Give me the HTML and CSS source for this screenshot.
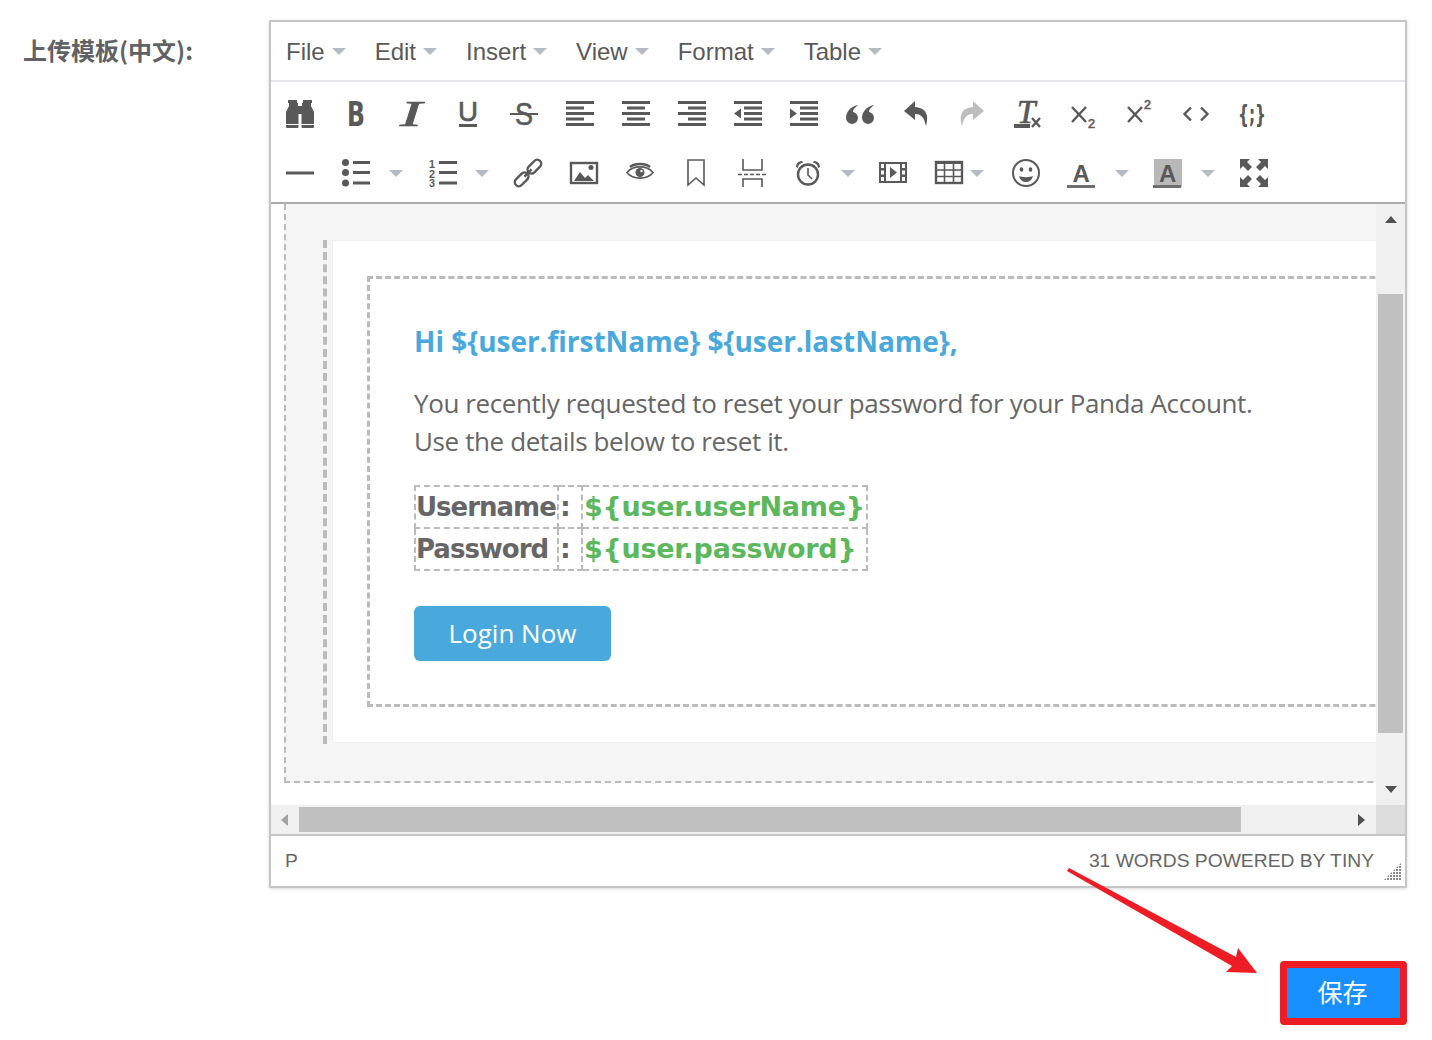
FILE: index.html
```html
<!DOCTYPE html>
<html lang="en">
<head>
    <meta charset="UTF-8">
    <meta name="viewport" content="width=device-width, initial-scale=1.0">
    <title>上传模板</title>
    <link rel="stylesheet" href="styles.css">
</head>
<body>

    <div class="form-row">
        <label class="form-label">上传模板(中文):</label>

        <div class="editor">
            <div class="menubar">
                <span class="menu-item">File<i class="menu-caret"></i></span>
                <span class="menu-item">Edit<i class="menu-caret"></i></span>
                <span class="menu-item">Insert<i class="menu-caret"></i></span>
                <span class="menu-item">View<i class="menu-caret"></i></span>
                <span class="menu-item">Format<i class="menu-caret"></i></span>
                <span class="menu-item">Table<i class="menu-caret"></i></span>
            </div>

            <div class="toolbar">
                <div class="tool-row">
                    <!-- search -->
                    <svg class="ico" viewBox="0 0 28 28"><path d="M2 0h9v3h1v3h4V3h1V0h9v3h-1v3l3 6v12H15.500V14h-3v10H0V12l3-6V3H2z"/><path d="M0 25h12.500v2a1 1 0 0 1-1 1H1a1 1 0 0 1-1-1zM15.500 25H28v2a1 1 0 0 1-1 1H16.500a1 1 0 0 1-1-1z"/></svg>
                    <!-- bold -->
                    <svg class="ico" viewBox="0 0 28 28"><text class="ico-bold" x="5" y="26" font-size="33" textLength="18" lengthAdjust="spacingAndGlyphs">B</text></svg>
                    <!-- italic -->
                    <svg class="ico" viewBox="0 0 28 28"><text class="ico-serif" x="2" y="26" font-size="36" textLength="22" lengthAdjust="spacingAndGlyphs">I</text></svg>
                    <!-- underline -->
                    <svg class="ico" viewBox="0 0 28 28"><text class="ico-med" x="4" y="21" font-size="27" textLength="20" lengthAdjust="spacingAndGlyphs">U</text><path d="M5 24h18v3H5z"/></svg>
                    <!-- strike -->
                    <svg class="ico" viewBox="0 0 28 28"><text class="ico-med" x="5" y="25" font-size="32" textLength="18" lengthAdjust="spacingAndGlyphs">S</text><path d="M0 13h28v2H0z"/></svg>
                    <!-- align left / center / right -->
                    <svg class="ico" viewBox="0 0 28 28"><path d="M0 1h28v3H0zM0 6.500h18v3H0zM0 12h28v3H0zM0 17.500h18v3H0zM0 23h28v3H0z"/></svg>
                    <svg class="ico" viewBox="0 0 28 28"><path d="M0 1h28v3H0zM5 6.500h18v3H5zM0 12h28v3H0zM5 17.500h18v3H5zM0 23h28v3H0z"/></svg>
                    <svg class="ico" viewBox="0 0 28 28"><path d="M0 1h28v3H0zM10 6.500h18v3H10zM0 12h28v3H0zM10 17.500h18v3H10zM0 23h28v3H0z"/></svg>
                    <!-- outdent / indent -->
                    <svg class="ico" viewBox="0 0 28 28"><path d="M0 1h28v3H0zM10 6.500h18v3H10zM10 12h18v3H10zM10 17.500h18v3H10zM0 23h28v3H0zM0 13.500l7-5v10z"/></svg>
                    <svg class="ico" viewBox="0 0 28 28"><path d="M0 1h28v3H0zM10 6.500h18v3H10zM10 12h18v3H10zM10 17.500h18v3H10zM0 23h28v3H0zM7 13.500l-7-5v10z"/></svg>
                    <!-- blockquote -->
                    <svg class="ico" viewBox="0 0 28 28"><path d="M12 5C6 6 0 11 0 18a6 6 0 1 0 7-6c0-3 3-5 5-7zM28 5c-6 1-12 6-12 13a6 6 0 1 0 7-6c0-3 3-5 5-7z"/></svg>
                    <!-- undo / redo -->
                    <svg class="ico" viewBox="0 0 28 28"><path d="M13 1L2 11l11 9v-6c6 0 9 3 11 12 3-10 1-18-11-19z"/></svg>
                    <svg class="ico ico-off" viewBox="0 0 28 28"><path d="M15 1l11 10-11 9v-6c-6 0-9 3-11 12-3-10-1-18 11-19z"/></svg>
                    <!-- remove format -->
                    <svg class="ico" viewBox="0 0 28 28"><text class="ico-serif" x="3" y="23" font-size="33">T</text><path d="M0 24h16v4H0z"/><path class="ico-line" d="M18 18l8 9M26 18l-8 9"/></svg>
                    <!-- subscript / superscript -->
                    <svg class="ico" viewBox="0 0 28 28"><path class="ico-line" d="M2 7l14 15M16 7L2 22"/><text class="ico-med" x="18" y="28" font-size="12" textLength="7" lengthAdjust="spacingAndGlyphs">2</text></svg>
                    <svg class="ico" viewBox="0 0 28 28"><path class="ico-line" d="M2 7l14 15M16 7L2 22"/><text class="ico-med" x="18" y="9" font-size="12" textLength="7" lengthAdjust="spacingAndGlyphs">2</text></svg>
                    <!-- code -->
                    <svg class="ico" viewBox="0 0 28 28"><path class="ico-line" d="M9 7.500L2.500 14 9 20.500M19 7.500l6.500 6.500-6.500 6.500"/></svg>
                    <svg class="ico" viewBox="0 0 28 28"><text class="ico-bold" x="0" y="23" font-size="25" textLength="28" lengthAdjust="spacingAndGlyphs">{;}</text></svg>
                </div>

                <div class="tool-row">
                    <!-- hr -->
                    <svg class="ico" viewBox="0 0 28 28"><path d="M0 12.500h28v3H0z"/></svg>
                    <!-- bullist -->
                    <svg class="ico ico-split" viewBox="0 0 28 28"><circle cx="3.500" cy="3.500" r="3.500"/><circle cx="3.500" cy="13.500" r="3.500"/><circle cx="3.500" cy="24" r="3.500"/><path d="M11 2h17v3H11zM11 12h17v3H11zM11 22.500h17v3H11z"/></svg>
                    <i class="tool-caret tool-caret-list"></i>
                    <!-- numlist -->
                    <svg class="ico ico-split" viewBox="0 0 28 28"><text class="ico-bold-sans" x="0" y="9" font-size="10.500" textLength="6" lengthAdjust="spacingAndGlyphs">1</text><text class="ico-bold-sans" x="0" y="18.500" font-size="10.500" textLength="6" lengthAdjust="spacingAndGlyphs">2</text><text class="ico-bold-sans" x="0" y="28" font-size="10.500" textLength="6" lengthAdjust="spacingAndGlyphs">3</text><path d="M10 2h18v3H10zM10 12h18v3H10zM10 22.500h18v3H10z"/></svg>
                    <i class="tool-caret tool-caret-num"></i>
                    <!-- link -->
                    <svg class="ico" viewBox="0 0 28 28"><g class="ico-line" transform="rotate(-45 14 14)"><rect x="-3" y="10" width="16" height="8" rx="4"/><rect x="15" y="10" width="16" height="8" rx="4"/><path d="M9 14h10"/></g></svg>
                    <!-- image -->
                    <svg class="ico" viewBox="0 0 28 28"><rect class="ico-line" x="1" y="4" width="26" height="20"/><path d="M4 22l6-9 5 6 3-3 6 6z"/><circle cx="21" cy="8.500" r="2.500"/></svg>
                    <!-- preview -->
                    <svg class="ico" viewBox="0 0 28 28"><path class="ico-thin" d="M1 13.500C7 6 21 6 27 13.500 21 21 7 21 1 13.500z"/><path class="ico-line" d="M4 8c5-4 15-4 20 0"/><circle cx="14" cy="13.500" r="4.500"/><circle class="ico-hole" cx="15.500" cy="12" r="1.200"/></svg>
                    <!-- anchor -->
                    <svg class="ico" viewBox="0 0 28 28"><path class="ico-thin" d="M6 1h16v25l-8-7-8 7z"/></svg>
                    <!-- pagebreak -->
                    <svg class="ico" viewBox="0 0 28 28"><path class="ico-thin" d="M5 0v11h19V0M5 28V20h19v8"/><path class="ico-thin" stroke-dasharray="4 2" d="M0 15.500h28"/></svg>
                    <!-- insertdatetime -->
                    <svg class="ico ico-split" viewBox="0 0 28 28"><circle class="ico-line" cx="14" cy="15.500" r="10"/><path class="ico-thin" d="M14 9v7l4 4"/><path d="M2 8c0-4 3-6 6-6l1 2c-3 0-5 2-5 5zM26 8c0-4-3-6-6-6l-1 2c3 0 5 2 5 5z"/></svg>
                    <i class="tool-caret tool-caret-short"></i>
                    <!-- media -->
                    <svg class="ico" viewBox="0 0 28 28"><path d="M0 3h28v21H0z"/><path class="ico-hole" d="M7 5h14v17H7zM2 5h3v4H2zM2 11.500h3v4H2zM2 18h3v4H2zM23 5h3v4h-3zM23 11.500h3v4h-3zM23 18h3v4h-3z"/><path d="M11 8l7 5.500-7 5.500z"/></svg>
                    <!-- table -->
                    <svg class="ico ico-split" viewBox="0 0 28 28"><rect class="ico-line" x="1" y="3" width="26" height="21"/><path d="M0 2h28v3H0z"/><path class="ico-thin" d="M9.500 3v21M18.500 3v21M1 11h26M1 17.500h26"/></svg>
                    <i class="tool-caret tool-caret-table"></i>
                    <!-- emoticons -->
                    <svg class="ico ico-tight" viewBox="0 0 28 28"><circle class="ico-emoji" cx="14" cy="14" r="13"/><ellipse cx="9.500" cy="10.500" rx="1.800" ry="2.300"/><ellipse cx="18.500" cy="10.500" rx="1.800" ry="2.300"/><path d="M7 17c3 1.500 11 1.500 14 0-1 4-3.500 6-7 6s-6-2-7-6z"/></svg>
                    <!-- forecolor -->
                    <svg class="ico ico-split" viewBox="0 0 28 28"><text class="ico-bold-sans" x="5.500" y="23" font-size="24">A</text><path class="ico-bar" d="M0 26h28v3H0z"/></svg>
                    <i class="tool-caret tool-caret-fore"></i>
                    <!-- backcolor -->
                    <svg class="ico ico-split" viewBox="0 0 28 28"><path class="ico-fill" d="M1 0h28v28H1z"/><text class="ico-bold-sans" x="6" y="23" font-size="24">A</text><path class="ico-bar" d="M0 26h28v3H0z"/></svg>
                    <i class="tool-caret tool-caret-back"></i>
                    <!-- fullscreen -->
                    <svg class="ico ico-last" viewBox="0 0 28 28"><path d="M0 0h10L7 3l5 5-4 4-5-5-3 3zM28 0H18l3 3-5 5 4 4 5-5 3 3zM0 28V18l3 3 5-5 4 4-5 5 3 3zM28 28H18l3-3-5-5 4-4 5 5 3-3z"/></svg>
                </div>
            </div>

            <div class="edit-area">
                <div class="viewport">
                    <div class="mail-outer">
                        <div class="mail-side">
                            <div class="mail-body">
                                <div class="mail-inner">
                                    <h3 class="mail-title">Hi ${user.firstName} ${user.lastName},</h3>
                                    <p class="mail-text">You recently requested to reset your password for your Panda Account.<br>Use the details below to reset it.</p>
                                    <table class="mail-table">
                                        <tr>
                                            <td class="cell-key">Username</td>
                                            <td class="cell-sep">:</td>
                                            <td class="cell-val">${user.userName}</td>
                                        </tr>
                                        <tr>
                                            <td class="cell-key">Password</td>
                                            <td class="cell-sep">:</td>
                                            <td class="cell-val">${user.password}</td>
                                        </tr>
                                    </table>
                                    <a class="mail-button">Login Now</a>
                                </div>
                            </div>
                        </div>
                    </div>
                </div>

                <div class="vscroll">
                    <i class="arrow-up"></i>
                    <div class="vscroll-thumb"></div>
                    <i class="arrow-down"></i>
                </div>

                <div class="hscroll">
                    <i class="arrow-left"></i>
                    <div class="hscroll-thumb"></div>
                    <i class="arrow-right"></i>
                </div>
                <div class="scroll-corner"></div>
            </div>

            <div class="statusbar">
                <span class="status-path">P</span>
                <span class="status-right">31 WORDS POWERED BY TINY</span>
                <svg class="grip" viewBox="0 0 17 17">
                    <defs><pattern id="gripDots" width="3" height="3" patternUnits="userSpaceOnUse"><rect width="2" height="2"/></pattern></defs>
                    <path fill="url(#gripDots)" d="M17 0v17H0z"/>
                </svg>
            </div>
        </div>
    </div>

    <div class="form-actions">
        <button class="save-button">保存</button>
    </div>

    <!-- red annotation arrow -->
    <svg class="note-arrow" viewBox="0 0 210 125">
        <path d="M7 11L9 8L176 97L178 88L197 113L166 112L172 106z"/>
    </svg>

</body>
</html>
```

FILE: styles.css
```css
* {
    box-sizing: border-box;
}
body {
    margin: 0;
    padding: 20px 25px 0 24px;
    font-family: "Liberation Sans", Arial, sans-serif;
    background-color: #fff;
    color: #595959;
}
.form-row {
    display: flex;
}
.form-label {
    width: 245px;
    flex: none;
    margin-top: 13px;
    text-indent: -1px;
    font-family: "Noto Sans CJK SC", sans-serif;
    font-size: 24px;
    line-height: 34px;
    font-weight: 700;
    color: #606266;
}
.editor {
    width: 1138px;
    height: 868px;
    flex: none;
    border: 2px solid #c5c5c5;
    box-shadow: 0 1px 3px rgba(0, 0, 0, 0.15);
    display: flex;
    flex-direction: column;
}

/* menu bar */
.menubar {
    height: 60px;
    flex: none;
    display: flex;
    align-items: center;
    gap: 29px;
    padding: 1px 0 0 15px;
    border-bottom: 2px solid #e2e4e7;
}
.menu-item {
    display: flex;
    align-items: center;
    font-size: 24px;
    color: #595959;
}
.menu-caret,
.tool-caret {
    width: 0;
    height: 0;
    border-left: 7px solid transparent;
    border-right: 7px solid transparent;
    border-top: 7px solid #b4bbc2;
}
.menu-caret {
    margin-left: 7px;
}

/* toolbar */
.toolbar {
    height: 122px;
    flex: none;
    padding: 18px 0 15px 15px;
    display: flex;
    flex-direction: column;
    gap: 31px;
    border-bottom: 2px solid #acacac;
}
.tool-row {
    display: flex;
    align-items: center;
    height: 28px;
}
.ico {
    width: 28px;
    height: 28px;
    flex: none;
    margin-right: 28px;
    fill: #595959;
    overflow: visible;
}
.ico text {
    font-family: "Liberation Sans", sans-serif;
}
.ico .ico-bold {
    font-family: "DejaVu Sans", sans-serif;
    font-weight: 700;
}
.ico .ico-bold-sans {
    font-weight: 700;
}
.ico .ico-med {
    stroke: #595959;
    stroke-width: 0.6;
}
.ico .ico-serif {
    font-family: "Liberation Serif", serif;
    font-style: italic;
    stroke: #595959;
    stroke-width: 0.7;
}
.ico-off {
    fill: #bdbdbd;
}
.ico-line {
    fill: none;
    stroke: #595959;
    stroke-width: 2.4;
}
.ico-thin {
    fill: none;
    stroke: #595959;
    stroke-width: 1.6;
}
.ico-emoji {
    fill: none;
    stroke: #595959;
    stroke-width: 2;
}
.ico-hole {
    fill: #fff;
}
.ico-fill {
    fill: #b8b8b8;
}
.ico-bar {
    fill: #6f6f6f;
}
.ico-split {
    margin-right: 0;
}
.ico-tight {
    margin-right: 27px;
}
.ico-last {
    margin-right: 0;
}
.tool-caret {
    flex: none;
    margin: 0 25px 0 19px;
}
.tool-caret-list {
    margin-right: 26px;
}
.tool-caret-num {
    margin-left: 18px;
}
.tool-caret-short {
    margin-right: 24px;
}
.tool-caret-table {
    margin: 0 28px 0 7px;
}
.tool-caret-fore {
    margin: 0 24px 0 20px;
}
.tool-caret-back {
    margin: 0 25px 0 20px;
}

/* editable area with scrollbars */
.edit-area {
    height: 632px;
    flex: none;
    display: grid;
    grid-template-columns: 1105px 29px;
    grid-template-rows: 601px 29px;
    border-bottom: 2px solid #c5c5c5;
}
.viewport {
    overflow: hidden;
    background-color: #fff;
}
.mail-outer {
    width: 1300px;
    height: 579px;
    margin-left: 13px;
    padding: 35px 0 37px 37px;
    background-color: #f5f5f5;
    border-left: 2px dashed #bbb;
    border-bottom: 2px dashed #bbb;
}
.mail-side {
    height: 504px;
    border-left: 4px dashed #bbb;
    padding-left: 5px;
}
.mail-body {
    height: 503px;
    margin-top: 1px;
    padding: 35px 0 0 34px;
    background-color: #fff;
    border: 1px solid #efefef;
}
.mail-inner {
    height: 431px;
    padding: 43px 0 0 44px;
    border: 3px dashed #bbb;
    border-right: none;
    color: #666;
    font-family: "Open Sans", "Liberation Sans", sans-serif;
}
.mail-title {
    margin: 0;
    font-size: 28px;
    line-height: 38px;
    font-weight: 700;
    letter-spacing: -0.03px;
    color: #49a8dc;
}
.mail-text {
    margin: 24px 0 0;
    font-size: 26px;
    line-height: 38px;
    letter-spacing: -0.39px;
    color: #666;
}
.mail-table {
    width: 454px;
    margin-top: 25px;
    table-layout: fixed;
    border-collapse: collapse;
    font-family: "DejaVu Sans", sans-serif;
    font-size: 27px;
    font-weight: 700;
    line-height: 38px;
}
.mail-table td {
    height: 42px;
    padding: 0 0 0 1px;
    border: 2px dashed #bbb;
    white-space: nowrap;
}
.mail-table .cell-key {
    width: 143px;
    padding-left: 0;
    font-size: 26px;
    letter-spacing: -1px;
    color: #666;
}
.cell-sep {
    width: 24px;
    color: #666;
    text-align: left;
}
.cell-val {
    letter-spacing: -0.25px;
    color: #5cb85c;
}
.mail-button {
    display: block;
    width: 197px;
    height: 55px;
    margin-top: 35px;
    border-radius: 6px;
    background-color: #4aa9dc;
    color: #fff;
    font-size: 26px;
    line-height: 55px;
    text-align: center;
}

.vscroll {
    display: flex;
    flex-direction: column;
    align-items: center;
    padding-top: 12px;
    background-color: #f0f0f0;
}
.vscroll-thumb {
    width: 25px;
    height: 439px;
    margin: 71px 0 53px;
    background-color: #c0c0c0;
}
.hscroll {
    display: flex;
    align-items: center;
    padding: 0 11px 0 10px;
    background-color: #f0f0f0;
}
.hscroll-thumb {
    width: 942px;
    height: 25px;
    margin: 0 117px 0 11px;
    background-color: #c0c0c0;
}
.scroll-corner {
    background-color: #dcdcdc;
}
.arrow-up,
.arrow-down {
    width: 0;
    height: 0;
    border-left: 6.5px solid transparent;
    border-right: 6.5px solid transparent;
}
.arrow-up {
    border-bottom: 7px solid #505050;
}
.arrow-down {
    border-top: 7px solid #505050;
}
.arrow-left,
.arrow-right {
    width: 0;
    height: 0;
    border-top: 6.5px solid transparent;
    border-bottom: 6.5px solid transparent;
}
.arrow-left {
    border-right: 7px solid #a3a3a3;
}
.arrow-right {
    border-left: 7px solid #505050;
}

/* status bar */
.statusbar {
    flex: 1;
    display: flex;
    align-items: center;
    padding: 0 4px 0 14px;
    font-size: 19.27px;
    color: #666;
}
.status-right {
    margin-left: auto;
}
.grip {
    width: 17px;
    height: 17px;
    margin: 20px 0 0 10px;
    fill: #8a8a8a;
}

/* save */
.form-actions {
    display: flex;
    justify-content: flex-end;
    margin-top: 73px;
}
.save-button {
    width: 127px;
    height: 64px;
    padding: 0 2px 4px 0;
    border: 7px solid #ee1c25;
    border-radius: 4px;
    background-color: #1890ff;
    color: #fff;
    font-family: "Noto Sans CJK SC", sans-serif;
    font-size: 25px;
    cursor: pointer;
}
.note-arrow {
    position: absolute;
    left: 1060px;
    top: 860px;
    width: 210px;
    height: 125px;
    fill: #ee1c25;
}
```
